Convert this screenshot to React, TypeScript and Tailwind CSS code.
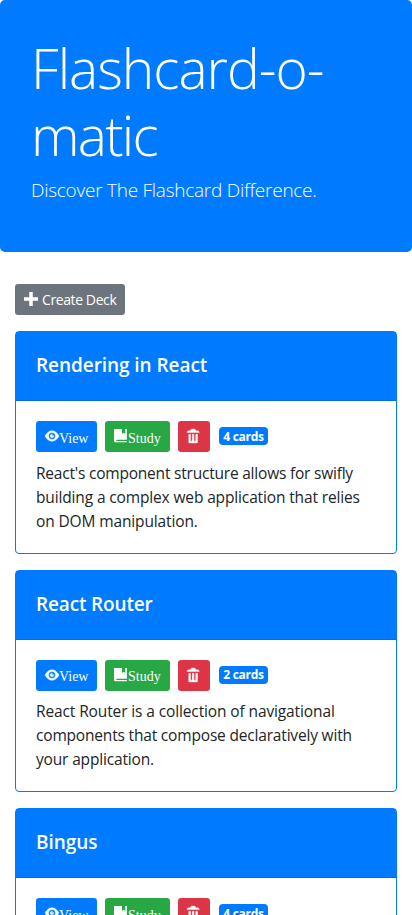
import React from "react";

const icons = {
  plus: { d: "M3 0v3h-3v2h3v3h2v-3h3v-2h-3v-3h-2z", stroke: 0 },
  eye: {
    d: "M4.03 1c-2.53 0-4.03 3-4.03 3s1.5 3 4.03 3c2.47 0 3.97-3 3.97-3s-1.5-3-3.97-3zm-.03 1c1.11 0 2 .9 2 2 0 1.11-.89 2-2 2-1.1 0-2-.89-2-2 0-1.1.9-2 2-2zm0 1c-.55 0-1 .45-1 1s.45 1 1 1 1-.45 1-1c0-.1-.04-.19-.06-.28-.08.16-.24.28-.44.28-.28 0-.5-.22-.5-.5 0-.2.12-.36.28-.44-.09-.03-.18-.06-.28-.06z",
    stroke: 0.25,
  },
  book: {
    d: "M.35 0h4.2v2.9l.95-.8.95.8v-2.9h.9v6.1h-5.7c-.25 0-.45.12-.45.3s.2.4.45.4h5.7v.8h-6.4c-.6 0-.95-.4-.95-.95v-6.3c0-.2.15-.35.35-.35z",
    stroke: 0,
  },
  trash: {
    d: "M3 0c-.55 0-1 .45-1 1h-1c-.55 0-1 .45-1 1h7c0-.55-.45-1-1-1h-1c0-.55-.45-1-1-1h-1zm-2 3v4.81c0 .11.08.19.19.19h4.63c.11 0 .19-.08.19-.19v-4.81h-1v3.5c0 .28-.22.5-.5.5s-.5-.22-.5-.5v-3.5h-1v3.5c0 .28-.22.5-.5.5s-.5-.22-.5-.5v-3.5h-1z",
    stroke: 0.22,
  },
};

function Icon({ name }: { name: keyof typeof icons }) {
  return (
    <svg viewBox="0 0 8 8" className="mb-[1px] h-[14px] w-[14px] shrink-0 overflow-visible fill-white stroke-white" aria-hidden="true">
      <path d={icons[name].d} strokeWidth={icons[name].stroke} />
    </svg>
  );
}

type Line = { text: string; tracking: string };
type Deck = { name: string; nameTracking: string; cards: number; lines: Line[] };

const decks: Deck[] = [
  {
    name: "Rendering in React",
    nameTracking: "tracking-[-0.06px]",
    cards: 4,
    lines: [
      { text: "React's component structure allows for swifly", tracking: "tracking-[-0.21px]" },
      { text: "building a complex web application that relies", tracking: "tracking-[-0.14px]" },
      { text: "on DOM manipulation.", tracking: "tracking-[-0.13px]" },
    ],
  },
  {
    name: "React Router",
    nameTracking: "tracking-[-0.15px]",
    cards: 2,
    lines: [
      { text: "React Router is a collection of navigational", tracking: "tracking-[-0.12px]" },
      { text: "components that compose declaratively with", tracking: "tracking-[-0.18px]" },
      { text: "your application.", tracking: "tracking-[-0.16px]" },
    ],
  },
  {
    name: "Bingus",
    nameTracking: "tracking-[-0.06px]",
    cards: 4,
    lines: [],
  },
];

function DeckCard({ deck }: { deck: Deck }) {
  return (
    <article className="mb-4 rounded border border-[#007bff] bg-white">
      <header className="flex h-[69px] items-center border-b border-[#006fe6] bg-[#007bff] px-5 pb-[2px]">
        <h2 className={`whitespace-nowrap text-[19px] font-semibold leading-6 text-white ${deck.nameTracking}`}>{deck.name}</h2>
      </header>
      <div className="px-5 pt-5 pb-[19.7px]">
        <div className="flex h-[31px] items-start">
          <button className="mr-2 flex h-[31px] w-[61px] items-center rounded-[3.2px] bg-[#007bff] pl-[9px] font-['Liberation_Serif',serif] text-[14px] text-white">
            <Icon name="eye" />
            <span className="mt-[3px]">View</span>
          </button>
          <button className="mr-2 flex h-[31px] w-[65px] items-center rounded-[3.2px] bg-[#28a745] pl-[9px] font-['Liberation_Serif',serif] text-[14px] text-white">
            <Icon name="book" />
            <span className="mt-[3px]">Study</span>
          </button>
          <button aria-label="Delete" className="mr-[9px] flex h-[31px] w-8 items-center rounded-[3.2px] bg-[#dc3545] pl-[9px]">
            <Icon name="trash" />
          </button>
          <span className="mt-[6px] flex h-[18px] w-[49px] items-center justify-center rounded bg-[#007bff] pt-px text-[12px] font-bold leading-3 tracking-[-0.25px] text-white">
            {deck.cards} cards
          </span>
        </div>
        <p className="mt-[8.7px] text-[15.5px] leading-6 text-[#212529]">
          {deck.lines.map((l) => (
            <span key={l.text} className="block whitespace-nowrap">
              <span className={l.tracking}>{l.text}</span>
            </span>
          ))}
        </p>
      </div>
    </article>
  );
}

export default function App() {
  return (
    <div className="h-[915px] overflow-hidden bg-white font-['Open_Sans','Noto_Sans',sans-serif]">
      <header className="h-[252px] rounded-[5px] bg-[#007bff] px-[31px] pt-[34px] text-white">
        <h1 className="whitespace-nowrap text-[55px] font-light leading-[67px]">
          <span className="block tracking-[-1px]">Flashcard-o-</span>
          <span className="block tracking-[-1.75px]">matic</span>
        </h1>
        <p className="mt-[7px] text-[19px] font-light leading-[30px] tracking-[-0.25px]">Discover The Flashcard Difference.</p>
      </header>
      <main className="px-[15px] pt-8">
        <button className="mb-[16.4px] flex h-[31px] w-[110px] items-center rounded-[3.2px] bg-[#6c757d] pl-[9px] text-[14px] text-white">
          <Icon name="plus" />
          <span className="ml-[4px] whitespace-nowrap tracking-[-0.4px]">Create Deck</span>
        </button>
        {decks.map((d) => (
          <DeckCard key={d.name} deck={d} />
        ))}
      </main>
    </div>
  );
}
